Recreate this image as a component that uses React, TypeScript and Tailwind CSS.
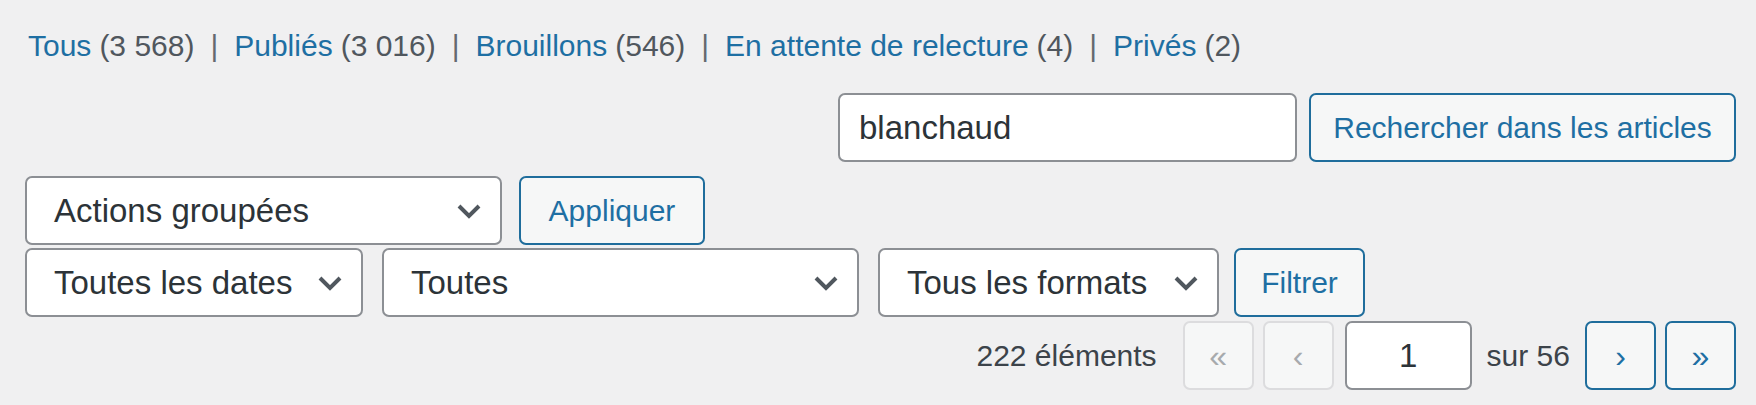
import * as React from "react"

const links = [
  { label: "Tous", count: "(3 568)" },
  { label: "Publiés", count: "(3 016)" },
  { label: "Brouillons", count: "(546)" },
  { label: "En attente de relecture", count: "(4)" },
  { label: "Privés", count: "(2)" },
]

function Chevron() {
  return (
    <svg width="26" height="16" viewBox="0 0 26 16" className="shrink-0">
      <path d="M3 3l10 10 10-10" fill="none" stroke="#50575e" strokeWidth="4" />
    </svg>
  )
}

function Select({ label, className }: { label: string; className: string }) {
  return (
    <div
      className={
        "flex h-[69px] items-center rounded-[7px] border-2 border-[#8c8f94] bg-white pl-[27px] pr-[18px] text-[33px] text-[#2c3338] " +
        className
      }
    >
      <span className="flex-1 whitespace-nowrap">{label}</span>
      <Chevron />
    </div>
  )
}

function Button({ children, className = "" }: { children: React.ReactNode; className?: string }) {
  return (
    <button
      className={
        "flex h-[69px] items-center justify-center whitespace-nowrap rounded-[7px] border-2 border-[#1f6d9c] bg-[#f6f7f7] px-[18px] text-[30px] text-[#1e6fa3] " +
        className
      }
    >
      {children}
    </button>
  )
}

function PageButton({ glyph, disabled }: { glyph: string; disabled?: boolean }) {
  return (
    <button
      className={
        disabled
          ? "flex h-[69px] w-[71px] items-center justify-center rounded-[7px] border-2 border-[#dcdcde] bg-[#f6f7f7] text-[32px] text-[#a7aaad]"
          : "flex h-[69px] w-[71px] items-center justify-center rounded-[7px] border-2 border-[#1f6d9c] bg-[#f6f7f7] text-[32px] text-[#1e6fa3]"
      }
    >
      {glyph}
    </button>
  )
}

export default function App() {
  return (
    <div className="h-[405px] overflow-hidden bg-[#f0f0f1] pl-[25px] pr-[20px] pt-[25px] font-['Liberation_Sans',Arial,sans-serif]">
      <ul className="flex h-[40px] items-center pl-[3px] text-[30px] text-[#646970]">
        {links.map((l, i) => (
          <li key={l.label} className="flex items-center whitespace-nowrap">
            <a className="text-[#1e6fa3]">{l.label}</a>
            <span className="ml-[8px] text-[#50575e]">{l.count}</span>
            {i < links.length - 1 && <span className="mx-[16px]">|</span>}
          </li>
        ))}
      </ul>

      <div className="mt-[28px] flex justify-end gap-[12px]">
        <div className="flex h-[69px] w-[459px] items-center rounded-[7px] border-2 border-[#8c8f94] bg-white px-[19px] text-[33px] text-[#2c3338]">
          blanchaud
        </div>
        <Button className="w-[427px]">Rechercher dans les articles</Button>
      </div>

      <div className="mt-[14px] flex gap-[17px]">
        <Select label="Actions groupées" className="w-[477px]" />
        <Button className="w-[186px]">Appliquer</Button>
      </div>

      <div className="mt-[3px] flex">
        <Select label="Toutes les dates" className="mr-[19px] w-[338px]" />
        <Select label="Toutes" className="mr-[19px] w-[477px]" />
        <Select label="Tous les formats" className="mr-[15px] w-[341px]" />
        <Button className="w-[131px]">Filtrer</Button>
      </div>

      <div className="mt-[4px] flex items-center justify-end text-[30px] text-[#3c434a]">
        <span className="mr-[26px] whitespace-nowrap">222 éléments</span>
        <div className="flex items-center gap-[9px]">
          <PageButton glyph="«" disabled />
          <PageButton glyph="‹" disabled />
          <div className="ml-[2px] flex h-[69px] w-[127px] items-center justify-center rounded-[7px] border-2 border-[#8c8f94] bg-white text-[33px] text-[#2c3338]">
            1
          </div>
          <span className="mx-[6px] whitespace-nowrap">sur 56</span>
          <PageButton glyph="›" />
          <PageButton glyph="»" />
        </div>
      </div>
    </div>
  )
}
